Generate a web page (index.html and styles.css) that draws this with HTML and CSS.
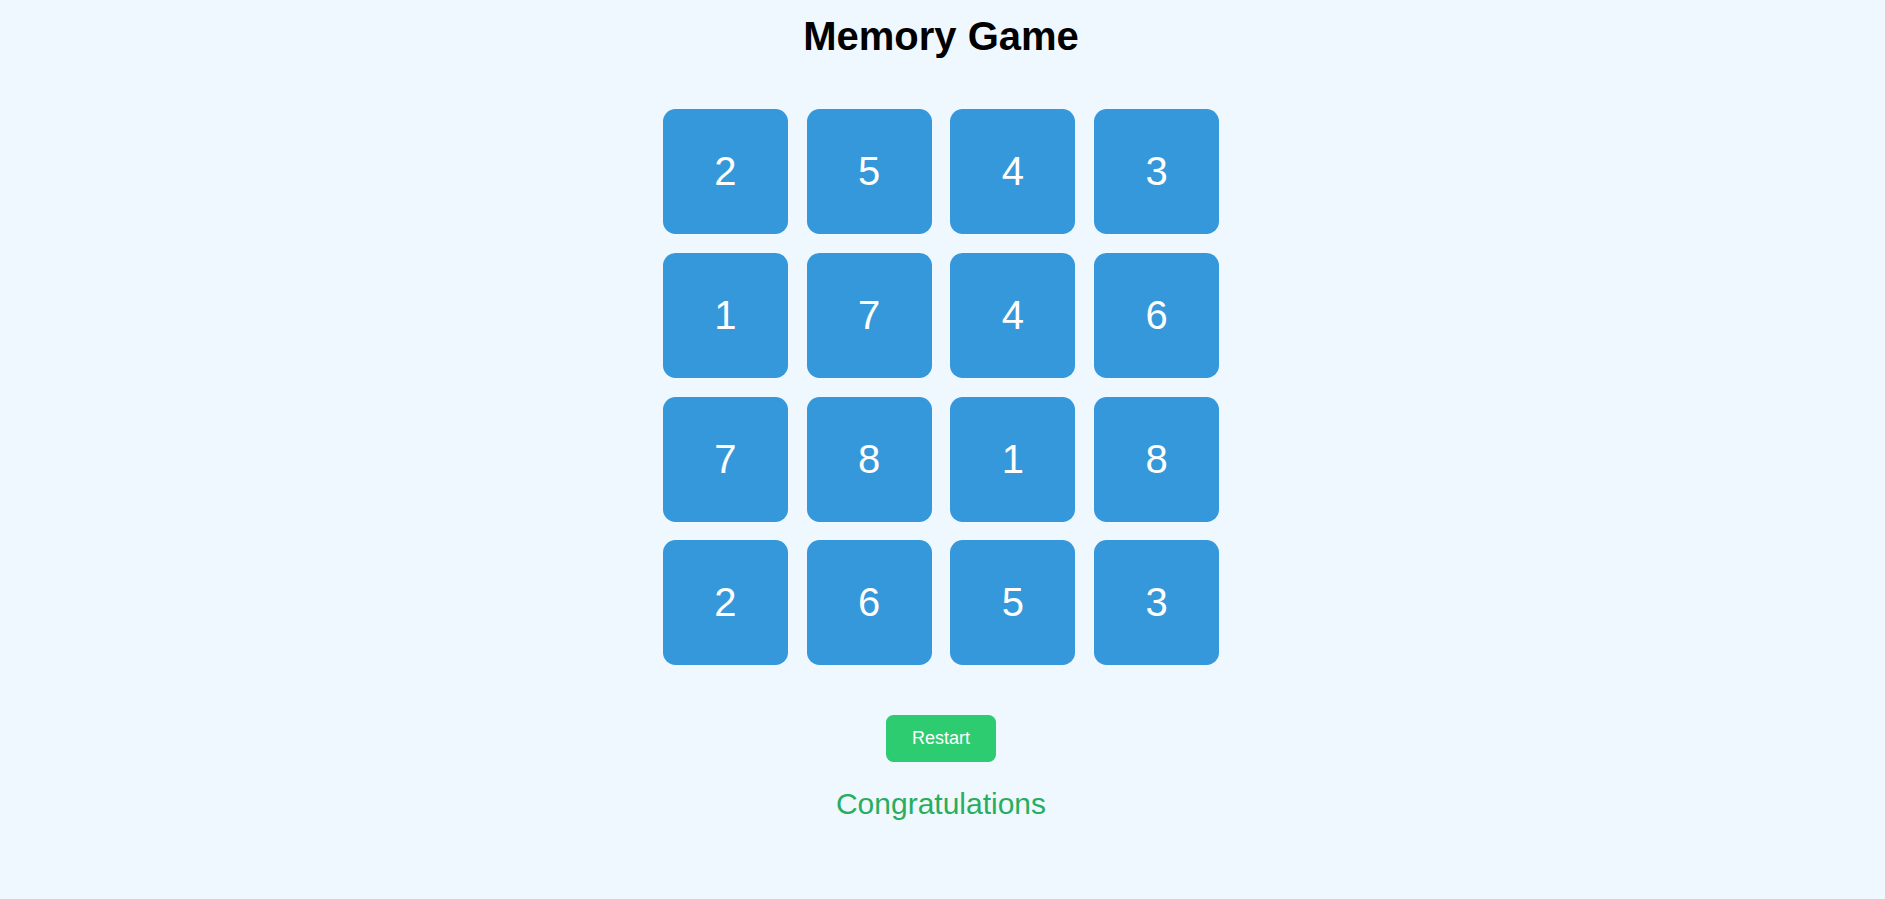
FILE: index.html
```html
<!DOCTYPE html>
<html lang="en">
<head>
<meta charset="utf-8">
<title>Memory Game</title>
<link rel="stylesheet" href="styles.css">
</head>
<body>
<main class="game">
  <h1 class="title">Memory Game</h1>
  <div class="board">
    <div class="card">2</div>
    <div class="card">5</div>
    <div class="card">4</div>
    <div class="card">3</div>
    <div class="card">1</div>
    <div class="card">7</div>
    <div class="card">4</div>
    <div class="card">6</div>
    <div class="card">7</div>
    <div class="card">8</div>
    <div class="card">1</div>
    <div class="card">8</div>
    <div class="card">2</div>
    <div class="card">6</div>
    <div class="card">5</div>
    <div class="card">3</div>
  </div>
  <button class="restart" type="button">Restart</button>
  <p class="message">Congratulations</p>
</main>
</body>
</html>
```
FILE: styles.css
```css
html, body {
  margin: 0;
  padding: 0;
}

body {
  background: #f0f8ff;
  font-family: "Liberation Sans", Arial, sans-serif;
  color: #000;
}

.game {
  display: flex;
  flex-direction: column;
  align-items: center;
  padding-top: 13px;
  padding-right: 3px;
}

.title {
  margin: 0;
  font-size: 40px;
  font-weight: bold;
  line-height: 46px;
}

.board {
  margin-top: 50px;
  display: grid;
  grid-template-columns: repeat(4, 125px);
  grid-auto-rows: 125px;
  gap: 18.75px;
}

.card {
  background: #3498db;
  color: #fff;
  border-radius: 12.5px;
  display: flex;
  align-items: center;
  justify-content: center;
  font-size: 40px;
}

.restart {
  margin-top: 49.75px;
  background: #2ecc71;
  color: #fff;
  border: none;
  border-radius: 7.5px;
  font-family: "Liberation Sans", Arial, sans-serif;
  font-size: 18px;
  line-height: 21px;
  padding: 12.8px 25.6px;
  cursor: pointer;
}

.message {
  margin: 25px 0 0;
  font-size: 30px;
  line-height: 34.5px;
  color: #27ae60;
}
```
